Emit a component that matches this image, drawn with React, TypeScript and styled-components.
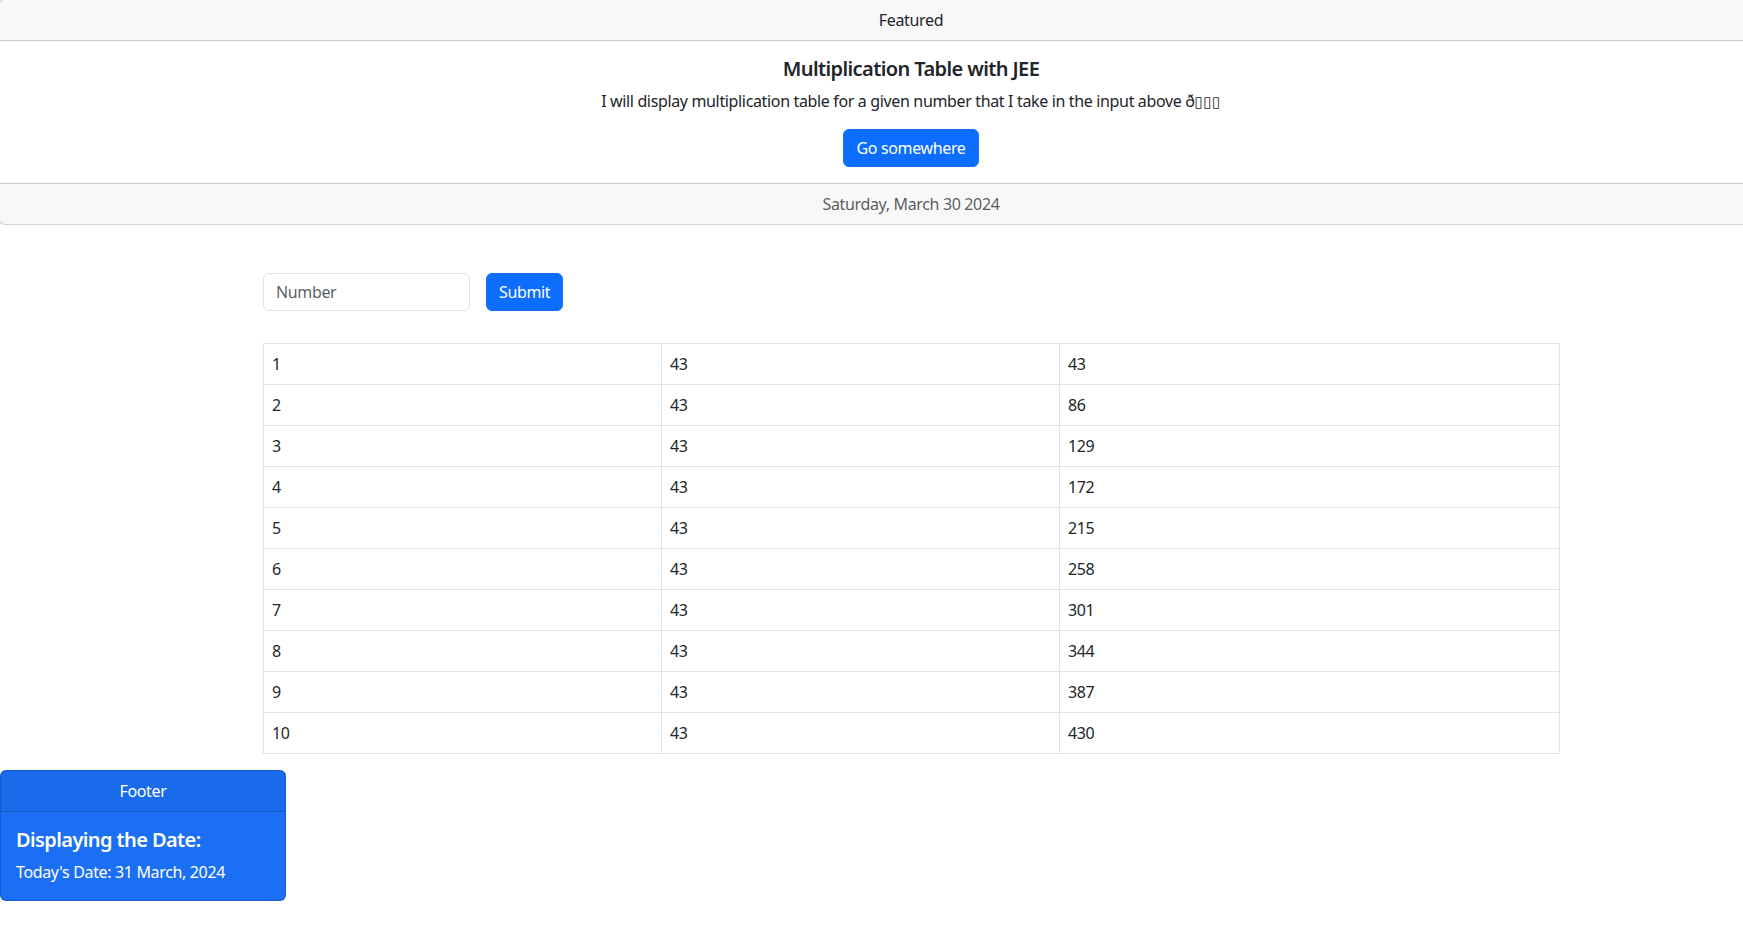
import React from "react";
import styled, { createGlobalStyle } from "styled-components";

const GlobalStyle = createGlobalStyle`
  * { box-sizing: border-box; }
  html { overflow-x: hidden; }
  html, body { margin: 0; padding: 0; background: #fff; }
  body {
    font-family: "Noto Sans", "Open Sans", Arial, sans-serif;
    font-size: 16px;
    line-height: 1.5;
    letter-spacing: -0.35px;
    color: #212529;
    overflow-x: hidden;
  }
`;

const Card = styled.div`
  display: flex;
  flex-direction: column;
  border: 1px solid rgba(0, 0, 0, 0.175);
  border-radius: 6px;
  background: #fff;
  overflow: hidden;
`;

const TopCard = styled(Card)`
  width: 1824px;
  margin: -1px 0 0 -1px;
  text-align: center;
`;

const CardHeader = styled.div`
  padding: 8px 16px;
  height: 41px;
  background: rgba(33, 37, 41, 0.03);
  border-bottom: 1px solid rgba(0, 0, 0, 0.175);
`;

const CardBody = styled.div`
  padding: 16px;
`;

const CardTitle = styled.h5`
  margin: 0 0 8px;
  font-size: 20px;
  font-weight: 600;
  letter-spacing: -0.6px;
  line-height: 24px;
  height: 24px;
`;

const CardText = styled.p`
  margin: 0 0 16px;
  height: 24px;
  &:last-child { margin-bottom: 0; }
`;

const Tofu = styled.span`
  font-family: "DejaVu Sans", sans-serif;
  letter-spacing: 0.5px;
  font-size: 15px;
  line-height: 1;
`;

const CardFooter = styled.div`
  padding: 8px 16px;
  height: 41px;
  background: rgba(33, 37, 41, 0.03);
  border-top: 1px solid rgba(0, 0, 0, 0.175);
  color: rgba(33, 37, 41, 0.75);
`;

const Button = styled.button`
  display: inline-block;
  height: 38px;
  padding: 6px 12px;
  font-family: inherit;
  font-size: 16px;
  line-height: 1.5;
  letter-spacing: inherit;
  color: #fff;
  background: #0d6efd;
  border: 1px solid #0d6efd;
  border-radius: 6px;
  cursor: pointer;
`;

const Main = styled.main`
  width: 1296px;
  margin-left: 263px;
  padding-top: 48px;
  display: flex;
  flex-direction: column;
`;

const Form = styled.form`
  display: flex;
  gap: 16px;
  align-items: center;
`;

const Input = styled.input`
  width: 207px;
  height: 38px;
  padding: 6px 12px;
  font-family: inherit;
  font-size: 16px;
  line-height: 1.5;
  letter-spacing: inherit;
  color: #212529;
  border: 1px solid #dee2e6;
  border-radius: 6px;
  outline: none;
  &::placeholder { color: rgba(33, 37, 41, 0.75); }
`;

const Table = styled.table`
  margin: 32px 0 16px;
  width: 1296px;
  border-collapse: collapse;
  table-layout: fixed;
`;

const Col = styled.col<{ $w: number }>`
  width: ${(p) => p.$w}px;
`;

const Td = styled.td`
  padding: 8px;
  height: 41px;
  border: 1px solid #dee2e6;
  line-height: 24px;
  color: #212529;
`;

const FooterCard = styled(Card)`
  width: 286px;
  background: #1a6ff4;
  border-color: rgba(0, 0, 0, 0.175);
  color: #fff;
  text-align: left;
`;

const FooterHeader = styled(CardHeader)`
  text-align: center;
  background: rgba(0, 0, 0, 0.03);
`;

const FooterBody = styled(CardBody)`
  padding-left: 15px;
`;

const rows = Array.from({ length: 10 }, (_, i) => i + 1);

export default function App() {
  return (
    <>
      <GlobalStyle />
      <TopCard>
        <CardHeader>Featured</CardHeader>
        <CardBody>
          <CardTitle>Multiplication Table with JEE</CardTitle>
          <CardText>
            I will display multiplication table for a given number that I take in the input above ð
            <Tofu>{"\u25AF\u25AF\u25AF"}</Tofu>
          </CardText>
          <Button type="button">Go somewhere</Button>
        </CardBody>
        <CardFooter>Saturday, March 30 2024</CardFooter>
      </TopCard>
      <Main>
        <Form onSubmit={(e) => e.preventDefault()}>
          <Input type="number" placeholder="Number" />
          <Button type="submit">Submit</Button>
        </Form>
        <Table>
          <colgroup>
            <Col $w={398} />
            <Col $w={398} />
            <Col $w={500} />
          </colgroup>
          <tbody>
            {rows.map((n) => (
              <tr key={n}>
                <Td>{n}</Td>
                <Td>43</Td>
                <Td>{n * 43}</Td>
              </tr>
            ))}
          </tbody>
        </Table>
      </Main>
      <FooterCard>
        <FooterHeader>Footer</FooterHeader>
        <FooterBody>
          <CardTitle>Displaying the Date:</CardTitle>
          <CardText>Today's Date: 31 March, 2024</CardText>
        </FooterBody>
      </FooterCard>
    </>
  );
}
